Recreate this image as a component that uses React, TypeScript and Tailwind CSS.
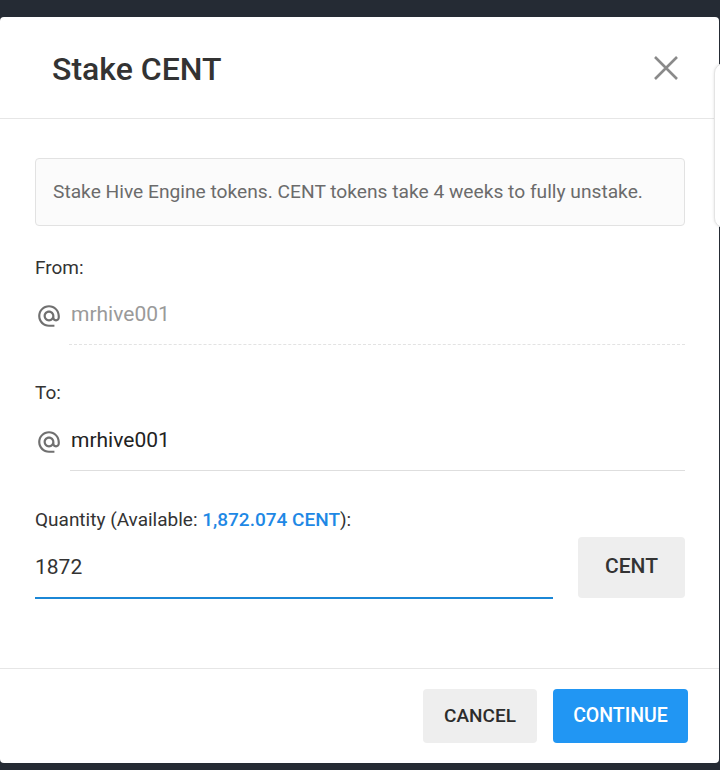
import React from "react";

const AtIcon = ({ color }: { color: string }) => (
  <svg width="26" height="26" viewBox="0 0 24 24" fill={color}>
    <path d="M12 2C6.48 2 2 6.48 2 12s4.48 10 10 10h5v-2h-5c-4.34 0-8-3.66-8-8s3.66-8 8-8 8 3.66 8 8v1.43c0 .79-.71 1.57-1.5 1.57s-1.5-.78-1.5-1.57V12c0-2.76-2.24-5-5-5s-5 2.24-5 5 2.24 5 5 5c1.38 0 2.64-.56 3.54-1.47.65.89 1.77 1.47 2.96 1.47 1.97 0 3.5-1.6 3.5-3.57V12c0-5.52-4.48-10-10-10zm0 13c-1.66 0-3-1.34-3-3s1.34-3 3-3 3 1.34 3 3-1.34 3-3 3z" />
  </svg>
);

export default function App() {
  return (
    <div
      className="relative w-[720px] h-[770px] bg-[#252b34] pt-[17px] overflow-hidden"
      style={{ fontFamily: "Roboto, 'Liberation Sans', sans-serif" }}
    >
      <div className="relative w-[719px] h-[746px] bg-white rounded-[4px] flex flex-col">
        {/* header */}
        <div className="h-[102px] flex items-center justify-between pl-[52px] pr-[41px] border-b border-[#e6e6e6] shrink-0">
          <h1 className="text-[32px] font-medium text-[#333] leading-none pt-[3px]">Stake CENT</h1>
          <svg width="24" height="24" viewBox="0 0 24 24" className="text-[#8a8a8a] mt-[1px]">
            <path d="M1 1 L23 23 M23 1 L1 23" stroke="currentColor" strokeWidth="2.6" />
          </svg>
        </div>
        {/* body */}
        <div className="flex-1 px-[35px] pr-[34px] flex flex-col">
          <div className="mt-[39px] h-[68px] rounded-[4px] border border-[#e2e2e2] bg-[#fbfbfb] flex items-center px-[17px] text-[19.2px] text-[#6b6b6b]">
            Stake Hive Engine tokens. CENT tokens take 4 weeks to fully unstake.
          </div>

          <div className="mt-[30px] h-[24px] leading-[24px] text-[19px] text-[#333]">From:</div>
          <div className="mt-[4px] flex items-stretch">
            <div className="w-[34px] flex items-center pl-[1px] pt-[2px]">
              <AtIcon color="#707070" />
            </div>
            <div className="flex-1 h-[61px] flex items-center border-b border-dashed border-[#e3e3e3] text-[21px] text-[#9a9a9a] pl-[2px] pt-[2px]">
              mrhive001
            </div>
          </div>

          <div className="mt-[36px] h-[24px] leading-[24px] text-[19px] text-[#333]">To:</div>
          <div className="mt-[5px] flex items-stretch">
            <div className="w-[35px] flex items-center pl-[1px] pt-[2px]">
              <AtIcon color="#707070" />
            </div>
            <div className="flex-1 h-[61px] flex items-center border-b border-[#dedede] text-[21px] text-[#222] pl-[1px] pt-[2px]">
              mrhive001
            </div>
          </div>

          <div className="mt-[37px] h-[24px] leading-[24px] text-[19px] text-[#333]">
            Quantity (Available: <span className="text-[#1e88e5] font-medium">1,872.074 CENT</span>):
          </div>
          <div className="mt-[5px] flex items-start gap-[25px]">
            <div className="w-[518px] h-[62px] flex items-center border-b-2 border-[#1b87d6] text-[21px] text-[#333] pt-[2px]">
              1872
            </div>
            <div className="w-[107px] h-[61px] rounded-[4px] bg-[#eeeeee] flex items-center justify-center text-[21px] font-medium text-[#333] pb-[2px]">
              CENT
            </div>
          </div>
        </div>
        {/* footer */}
        <div className="h-[95px] shrink-0 border-t border-[#e6e6e6] flex items-start justify-end gap-[16px] pr-[31px] pt-[20px]">
          <button className="w-[114px] h-[54px] rounded-[4px] bg-[#eeeeee] text-[19px] font-medium text-[#2c2c2c]">
            CANCEL
          </button>
          <button className="w-[135px] h-[54px] rounded-[4px] bg-[#2196f3] text-[19.5px] font-medium text-white">
            CONTINUE
          </button>
        </div>
        <div className="absolute left-[714px] top-[46px] w-[20px] h-[165px] rounded-l-[10px] border border-[#e4e4e4] bg-white shadow-[0_0_3px_rgba(0,0,0,0.12)]" />
      </div>
    </div>
  );
}
